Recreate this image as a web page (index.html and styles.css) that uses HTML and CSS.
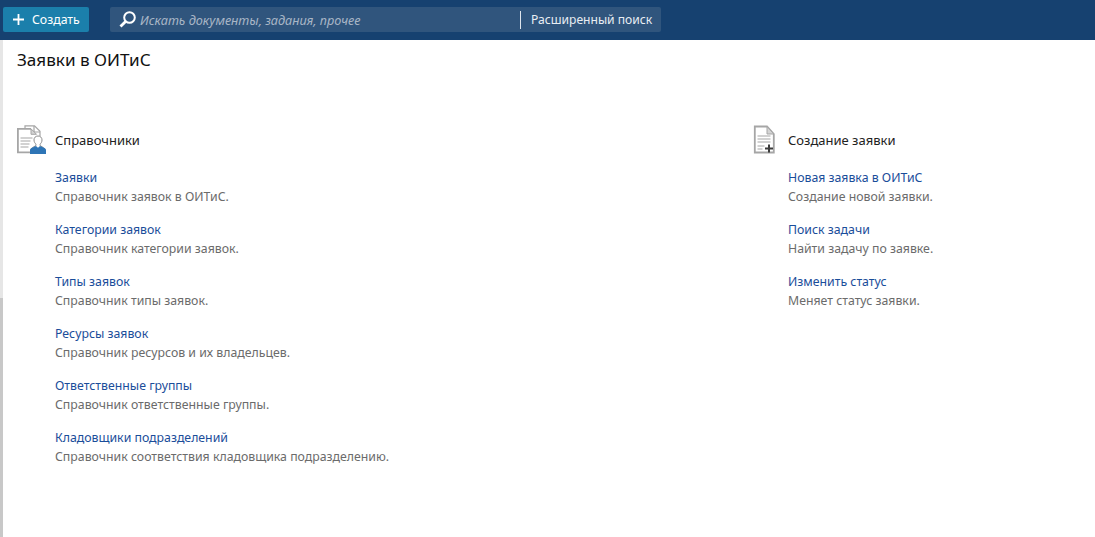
FILE: index.html
```html
<!DOCTYPE html>
<html lang="ru">
<head>
<meta charset="utf-8">
<title>Заявки в ОИТиС</title>
<link rel="stylesheet" href="styles.css">
</head>
<body>
<header class="topbar">
  <button class="create-btn">
    <svg class="plus-icon" width="11" height="11" viewBox="0 0 11 11"><path d="M5.500 0v11M0 5.500h11" stroke="#fff" stroke-width="1.800" fill="none"/></svg>
    <span>Создать</span>
  </button>
  <div class="search">
    <svg class="search-icon" width="17" height="17" viewBox="0 0 17 17"><circle cx="10.500" cy="6.500" r="5.300" fill="none" stroke="#fff" stroke-width="2"/><path d="M6.600 10.400 1.500 15.500" stroke="#fff" stroke-width="2.800" fill="none"/></svg>
    <span class="search-placeholder">Искать документы, задания, прочее</span>
    <span class="search-divider"></span>
    <span class="search-advanced">Расширенный поиск</span>
  </div>
</header>
<div class="page">
  <div class="rail"><div class="rail-thumb"></div></div>
  <main class="content">
    <h1 class="title">Заявки в ОИТиС</h1>
    <div class="columns">
      <section class="group">
        <div class="group-head">
          <svg class="group-icon" width="30" height="30" viewBox="0 0 30 30">
            <path d="M8 3V.8h9.500l5.500 5.500V11" fill="none" stroke="#a6a6a6" stroke-width="1.200"/>
            <path d="M17 1v6h6" fill="none" stroke="#a6a6a6" stroke-width="1.200"/>
            <path d="M14 3.800H.9v23.600h13" fill="none" stroke="#a6a6a6" stroke-width="1.800"/>
            <path d="M14 3.800l5.500 5.500H14z" fill="#d4d4d4" stroke="#a6a6a6" stroke-width="1"/>
            <path d="M3.500 13h12M3.500 16h10M3.500 19h9M3.500 22h8" stroke="#a6a6a6" stroke-width="1.200" fill="none"/>
            <path d="M21 11c-2.500 0-4 1.700-4 3.900 0 2 1 3.500 2 4.300v1.300l-3.800 2.300c-.9.600-1.200 1.400-1.200 2.400v2.300h14v-2.300c0-1-.4-1.800-1.300-2.400L23 20.500v-1.300c1-.8 2-2.300 2-4.300 0-2.200-1.500-3.900-4-3.900z" fill="#fff" stroke="#8c8c8c" stroke-width="1"/>
            <path d="M19 21l2 1.800 2-1.800 4.500 2c.9.500 1.500 1.200 1.500 2.200v3.800H13v-3.800c0-1 .6-1.700 1.500-2.200z" fill="#2e75b6"/>
          </svg>
          <h2 class="group-title">Справочники</h2>
        </div>
        <ul class="links">
          <li><a href="#">Заявки</a><p>Справочник заявок в ОИТиС.</p></li>
          <li><a href="#">Категории заявок</a><p>Справочник категории заявок.</p></li>
          <li><a href="#">Типы заявок</a><p>Справочник типы заявок.</p></li>
          <li><a href="#">Ресурсы заявок</a><p>Справочник ресурсов и их владельцев.</p></li>
          <li><a href="#">Ответственные группы</a><p>Справочник ответственные группы.</p></li>
          <li><a href="#">Кладовщики подразделений</a><p>Справочник соответствия кладовщика подразделению.</p></li>
        </ul>
      </section>
      <section class="group group-right">
        <div class="group-head">
          <svg class="group-icon" width="23" height="30" viewBox="0 0 23 30">
            <path d="M14 1.500H1.800v26h19V9z" fill="none" stroke="#a6a6a6" stroke-width="1.800"/>
            <path d="M14 1.500l6.800 7.500H14z" fill="#d4d4d4" stroke="#a6a6a6" stroke-width="1"/>
            <path d="M4.500 11h13M4.500 14h13M4.500 17h13M4.500 21h7M4.500 24h5" stroke="#a6a6a6" stroke-width="1.200" fill="none"/>
            <path d="M16 19.500v8M12 23.500h8" stroke="#3b3b3b" stroke-width="2" fill="none"/>
          </svg>
          <h2 class="group-title">Создание заявки</h2>
        </div>
        <ul class="links">
          <li><a href="#">Новая заявка в ОИТиС</a><p>Создание новой заявки.</p></li>
          <li><a href="#">Поиск задачи</a><p>Найти задачу по заявке.</p></li>
          <li><a href="#">Изменить статус</a><p>Меняет статус заявки.</p></li>
        </ul>
      </section>
    </div>
  </main>
</div>
</body>
</html>
```

FILE: styles.css
```css
* { box-sizing: border-box; }
html, body { margin: 0; height: 100%; overflow: hidden; }
body { font-family: "Noto Sans", "Open Sans", sans-serif; font-size: 12.3px; background: #fff; color: #222; display: flex; flex-direction: column; }

.topbar { height: 40px; flex: none; background: #164170; display: flex; align-items: flex-start; padding: 7px 0 0 3px; }
.create-btn { width: 86px; height: 25px; border: 0; border-radius: 2px; background: #1b7fab; color: #fff; font: inherit; display: flex; align-items: center; padding: 0 0 0 10px; gap: 8px; }
.plus-icon { flex: none; }
.search { margin-left: 21px; width: 551px; height: 25px; background: #30557d; border-radius: 2px; display: flex; align-items: center; padding-left: 9px; }
.search-icon { flex: none; }
.search-placeholder { margin-left: 4px; width: 380px; font-size: 12.7px; color: #a9b6c6; font-style: italic; white-space: nowrap; }
.search-divider { width: 1px; height: 18px; background: #dfe5ec; flex: none; }
.search-advanced { margin-left: 10px; font-size: 12.1px; color: #e8edf3; white-space: nowrap; }

.page { flex: 1; display: flex; min-height: 0; }
.rail { width: 3px; flex: none; background: #e6e6e6; display: flex; flex-direction: column; justify-content: flex-end; }
.rail-thumb { height: 239px; background: #c8c8c8; }
.content { flex: 1; padding: 9px 0 0 14px; }
.title { margin: 0; font-size: 17.1px; font-weight: 400; line-height: 22px; color: #111; }
.columns { display: flex; margin-top: 54px; }
.group { width: 736px; }
.group-right { width: auto; }
.group-head { display: flex; align-items: center; height: 30px; }
.group-icon { flex: none; }
.group-title { margin: 0 0 0 8px; font-size: 13px; font-weight: 400; color: #222; }
.group-right .group-title { margin-left: 12px; }
.links { list-style: none; margin: 12px 0 0 38px; padding: 0; display: flex; flex-direction: column; gap: 12px; }
.group-right .links { margin-left: 35px; }
.links li { height: 40px; }
.links a { display: block; line-height: 22px; color: #1a4d9a; text-decoration: none; white-space: nowrap; }
.links p { margin: 0; line-height: 16px; color: #6b6b6b; white-space: nowrap; }
```
